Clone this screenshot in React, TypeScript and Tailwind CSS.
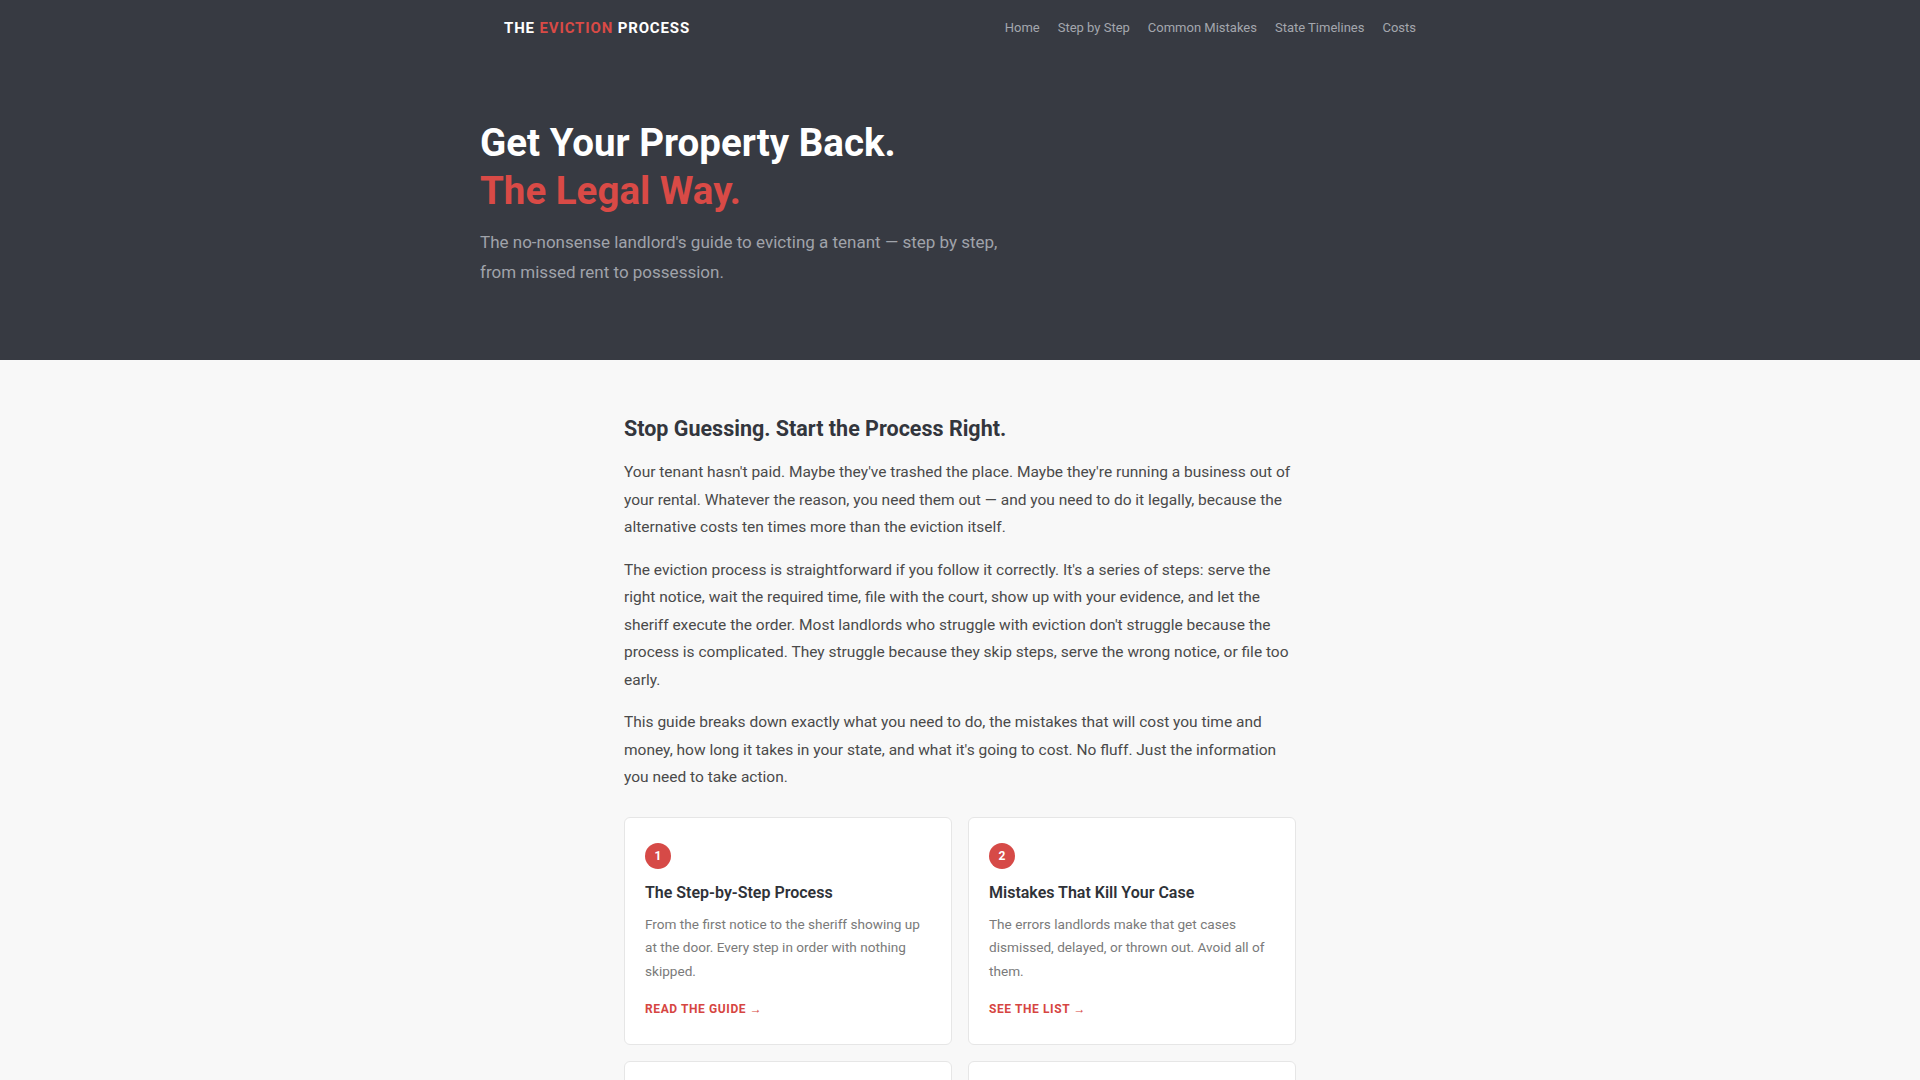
import React from 'react';

const navLinks = ['Home', 'Step by Step', 'Common Mistakes', 'State Timelines', 'Costs'];

const cards = [
  {
    n: 1,
    title: 'The Step-by-Step Process',
    body: 'From the first notice to the sheriff showing up at the door. Every step in order with nothing skipped.',
    cta: 'Read the Guide',
  },
  {
    n: 2,
    title: 'Mistakes That Kill Your Case',
    body: 'The errors landlords make that get cases dismissed, delayed, or thrown out. Avoid all of them.',
    cta: 'See the List',
  },
  {
    n: 3,
    title: 'State-by-State Timelines',
    body: 'How long an eviction really takes where your property is, from notice period to final judgment.',
    cta: 'Check Your State',
  },
  {
    n: 4,
    title: 'What It Will Cost',
    body: 'Filing fees, service costs, attorney fees and lost rent. Know the numbers before you start.',
    cta: 'See the Costs',
  },
];

const App: React.FC = () => {
  return (
    <div className="min-h-screen w-full bg-[#f8f8f8] font-['Roboto','Liberation_Sans',sans-serif]">
      {/* Dark header + hero */}
      <div className="bg-[#373a42]">
        <header className="max-w-[960px] mx-auto px-6 h-[56px] flex items-center justify-between">
          <a className="text-[15px] font-bold tracking-[0.85px] text-white">
            THE <span className="text-[#d94a46]">EVICTION</span> PROCESS
          </a>
          <nav className="flex items-center gap-[18px]">
            {navLinks.map((l) => (
              <a key={l} className="text-[13px] text-[#a4a7ae]">
                {l}
              </a>
            ))}
          </nav>
        </header>

        <section className="max-w-[960px] mx-auto pt-[63px] pb-[73px]">
          <h1 className="text-[38.5px] leading-[48px] font-bold text-white">
            Get Your Property Back.
            <br />
            <span className="text-[#d94a46]">The Legal Way.</span>
          </h1>
          <p className="mt-[12px] max-w-[540px] text-[17px] leading-[30px] text-[#a0a3aa]">
            The no-nonsense landlord's guide to evicting a tenant — step by step, from missed rent to possession.
          </p>
        </section>
      </div>

      {/* Main content */}
      <main className="max-w-[672px] mx-auto pt-[55px] pb-16">
        <h2 className="text-[21.5px] leading-[28px] font-bold text-[#33363d] mb-4">
          Stop Guessing. Start the Process Right.
        </h2>
        <p className="text-[15.5px] leading-[27.5px] text-[#4a4a4a] mb-[15px]">
          Your tenant hasn't paid. Maybe they've trashed the place. Maybe they're running a business out of your
          rental. Whatever the reason, you need them out — and you need to do it legally, because the alternative
          costs ten times more than the eviction itself.
        </p>
        <p className="text-[15.5px] leading-[27.5px] text-[#4a4a4a] mb-[15px]">
          The eviction process is straightforward if you follow it correctly. It's a series of steps: serve the
          right notice, wait the required time, file with the court, show up with your evidence, and let the sheriff
          execute the order. Most landlords who struggle with eviction don't struggle because the process is
          complicated. They struggle because they skip steps, serve the wrong notice, or file too early.
        </p>
        <p className="text-[15.5px] leading-[27.5px] text-[#4a4a4a]">
          This guide breaks down exactly what you need to do, the mistakes that will cost you time and money, how
          long it takes in your state, and what it's going to cost. No fluff. Just the information you need to take
          action.
        </p>

        <div className="mt-[25px] grid grid-cols-2 gap-x-4 gap-y-4">
          {cards.map((c) => (
            <div key={c.n} className="bg-white border border-[#e6e6e6] rounded-[6px] px-5 pt-[25px] pb-6">
              <div className="w-[26px] h-[26px] rounded-full bg-[#d64a47] text-white text-[12px] font-bold flex items-center justify-center mb-[12px]">
                {c.n}
              </div>
              <h3 className="text-[16px] leading-[24px] font-semibold text-[#2f3238] mb-2">{c.title}</h3>
              <p className="text-[13.6px] leading-[23.8px] text-[#7a7a7a] mb-3">{c.body}</p>
              <a className="text-[12px] leading-[18px] font-bold uppercase tracking-[0.05em] text-[#d64541]">
                {c.cta} →
              </a>
            </div>
          ))}
        </div>
      </main>
    </div>
  );
};

export default App;
